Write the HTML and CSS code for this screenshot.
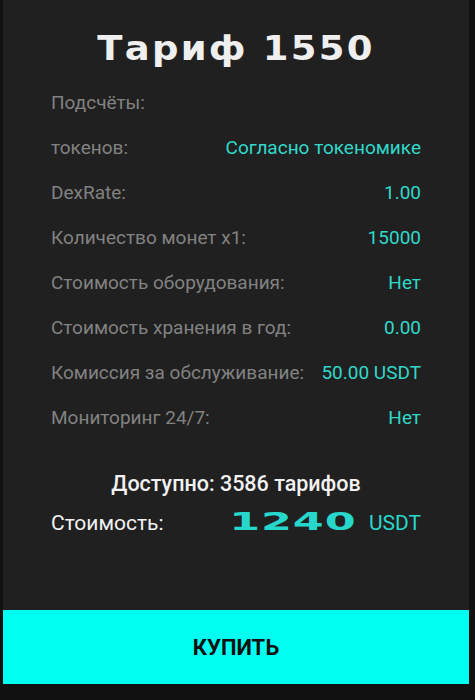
FILE: index.html
```html
<!DOCTYPE html>
<html lang="ru">
<head>
<meta charset="utf-8">
<link rel="stylesheet" href="styles.css">
</head>
<body>
<div class="page">
  <div class="card">
    <h1 class="title">Тариф 1550</h1>
    <div class="rows">
      <div class="row"><span class="label">Подсчёты:</span><span class="value"></span></div>
      <div class="row"><span class="label">токенов:</span><span class="value">Согласно токеномике</span></div>
      <div class="row"><span class="label">DexRate:</span><span class="value">1.00</span></div>
      <div class="row"><span class="label">Количество монет x1:</span><span class="value">15000</span></div>
      <div class="row"><span class="label">Стоимость оборудования:</span><span class="value">Нет</span></div>
      <div class="row"><span class="label">Стоимость хранения в год:</span><span class="value">0.00</span></div>
      <div class="row"><span class="label">Комиссия за обслуживание:</span><span class="value">50.00 USDT</span></div>
      <div class="row"><span class="label">Мониторинг 24/7:</span><span class="value">Нет</span></div>
    </div>
    <div class="available">Доступно: 3586 тарифов</div>
    <div class="price-row">
      <span class="price-label">Стоимость:</span>
      <span class="price"><span class="amount">1240</span><span class="currency">USDT</span></span>
    </div>
  </div>
  <button class="buy">КУПИТЬ</button>
</div>
</body>
</html>
```
FILE: styles.css
```css
html, body {
  margin: 0;
  padding: 0;
  background: #111111;
}
.page {
  width: 466px;
  margin-left: 3px;
  height: 700px;
}
.card {
  background: #202020;
  height: 610px;
  box-sizing: border-box;
  padding: 29px 48px 0 48px;
  display: flex;
  flex-direction: column;
}
.title {
  margin: 0;
  text-align: center;
  color: #efefef;
  font-family: "DejaVu Sans", sans-serif;
  font-weight: bold;
  font-size: 33px;
  letter-spacing: 2px;
  line-height: 40px;
  transform: scaleX(1.12);
}
.rows {
  margin-top: 11px;
  display: flex;
  flex-direction: column;
}
.row {
  height: 45px;
  display: flex;
  justify-content: space-between;
  align-items: center;
  font-family: Roboto, "Noto Sans", sans-serif;
  font-size: 19px;
}
.label {
  color: #828282;
}
.value {
  color: #30d8ca;
}
.available {
  margin-top: 31px;
  text-align: center;
  color: #f2f2f2;
  font-family: Roboto, sans-serif;
  font-weight: 500;
  font-size: 21.5px;
}
.price-row {
  margin-top: 11px;
  display: flex;
  justify-content: space-between;
  align-items: baseline;
  font-family: Roboto, sans-serif;
}
.price-label {
  color: #f2f2f2;
  font-size: 21px;
}
.price {
  display: flex;
  align-items: baseline;
  gap: 12px;
}
.amount {
  color: #28d7cc;
  font-family: "DejaVu Sans", sans-serif;
  font-weight: bold;
  font-size: 25px;
  letter-spacing: 0.5px;
  transform: scaleX(1.78);
  transform-origin: right center;
  display: inline-block;
}
.currency {
  color: #28d7cc;
  font-size: 21px;
}
.buy {
  display: block;
  width: 100%;
  height: 74px;
  border: none;
  margin: 0;
  background: #00fff0;
  color: #111;
  font-family: Roboto, sans-serif;
  font-weight: bold;
  font-size: 22px;
  padding: 0;
}
```
